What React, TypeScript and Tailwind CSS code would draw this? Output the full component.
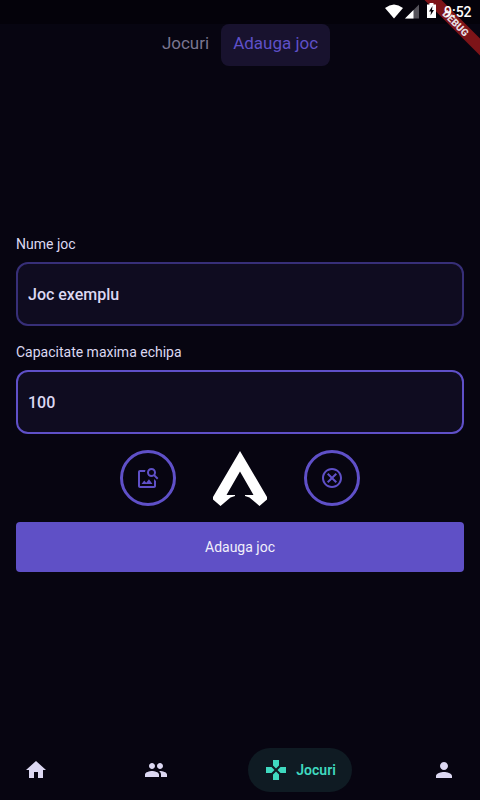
import { useState } from "react";
import {
  MdGames,
  MdHome,
  MdOutlineCancel,
  MdOutlineImageSearch,
  MdPerson,
} from "react-icons/md";

function StatusBar() {
  return (
    <header className="relative flex h-6 items-center justify-end bg-[#04020a] pr-2 text-white">
      <div className="absolute top-0 right-0 h-16 w-16 overflow-hidden">
        <div className="absolute top-[17px] -right-8 flex h-3 w-28 rotate-45 items-center justify-center bg-[#7d1418] text-[10px] font-black text-[#e6dfe4]">
          DEBUG
        </div>
      </div>
      <svg className="relative h-6 w-[52px]" viewBox="0 0 52 24" aria-hidden="true">
        <path d="M1 8Q10 1 19 8L10 18.500Z" fill="currentColor" />
        <path d="M35 4.500V18.500H21Z" fill="#55535a" />
        <path d="M29.500 10V18.500H21Z" fill="currentColor" />
        <path d="M43 4.500H45.500V3H49.500V4.500H52V18H43Z" fill="currentColor" />
        <path d="M48.500 6L45 11.500H47L46.500 15.500L50 10H48Z" fill="#04020a" />
      </svg>
      <time className="relative ml-2 w-7 text-sm leading-6 font-medium">9:52</time>
    </header>
  );
}

function PeopleIcon() {
  return (
    <svg className="size-6" viewBox="0 0 24 24" fill="currentColor" aria-hidden="true">
      <path d="M16 11c1.660 0 2.990-1.340 2.990-3S17.660 5 16 5s-3 1.340-3 3 1.340 3 3 3zm-8 0c1.660 0 2.990-1.340 2.990-3S9.660 5 8 5 5 6.340 5 8s1.340 3 3 3zm0 2c-2.330 0-7 1.170-7 3.500V19h14v-2.500c0-2.330-4.670-3.500-7-3.500zm8 0c-.290 0-.620.020-.970.050 1.160.840 1.970 1.970 1.970 3.450V19h6v-2.500c0-2.330-4.670-3.500-7-3.500z" />
    </svg>
  );
}

function Field({
  id,
  label,
  initial,
  className,
}: {
  id: string;
  label: string;
  initial: string;
  className: string;
}) {
  const [value, setValue] = useState(initial);
  return (
    <div className="flex flex-col gap-2">
      <label htmlFor={id} className="text-sm leading-5">
        {label}
      </label>
      <input
        id={id}
        value={value}
        onChange={(e) => setValue(e.target.value)}
        className={`h-16 w-full rounded-xl border-2 bg-[#0f0c20] px-[10px] text-base font-medium outline-none ${className}`}
      />
    </div>
  );
}

export default function App() {
  const circle =
    "flex size-14 items-center justify-center rounded-full border-3 border-[#5f50c8] text-[#5f50c8]";
  const navItem = "flex h-11 items-center gap-2 rounded-full px-4";
  return (
    <div className="flex min-h-screen flex-col bg-[#070511] font-[Roboto,sans-serif] text-[#dcd8f2]">
      <StatusBar />
      <div className="flex justify-center text-[17px]">
        <button className="h-[42px] rounded-lg px-3 pb-0.5 text-[#7a7690]">Jocuri</button>
        <button className="h-[42px] rounded-lg bg-[#18122e] px-3 pb-0.5 text-[#5f50c8]">
          Adauga joc
        </button>
      </div>

      <form
        className="flex flex-1 flex-col justify-center gap-4 px-4"
        onSubmit={(e) => e.preventDefault()}
      >
        <Field id="name" label="Nume joc" initial="Joc exemplu" className="border-[#372f78]" />
        <Field
          id="capacity"
          label="Capacitate maxima echipa"
          initial="100"
          className="border-[#5f50c8]"
        />
        <div className="flex justify-center gap-9">
          <button type="button" aria-label="Alege imagine" className={circle}>
            <MdOutlineImageSearch size={24} />
          </button>
          <svg className="size-14" viewBox="0 0 56 56" fill="#fff" aria-hidden="true">
            <path d="M28 1L55 47V49.500L47.500 56L37.500 47.500L33 46V45H41.500L28 21.500L14.500 45H23V46L18.500 47.500L8.500 56L1 49.500V47Z" />
          </svg>
          <button type="button" aria-label="Sterge imaginea" className={circle}>
            <MdOutlineCancel size={24} />
          </button>
        </div>
        <button type="submit" className="h-[50px] rounded bg-[#5f50c6] text-sm text-[#f1effb]">
          Adauga joc
        </button>
      </form>

      <nav className="flex justify-between px-2 pt-2 pb-2">
        <a href="#acasa" aria-label="Acasa" className={navItem}>
          <MdHome size={24} />
        </a>
        <a href="#echipe" aria-label="Echipe" className={navItem}>
          <PeopleIcon />
        </a>
        <a href="#jocuri" className={`${navItem} bg-[#0f1b23] text-[#3fd9bf]`}>
          <MdGames size={24} />
          <span className="text-sm font-semibold">Jocuri</span>
        </a>
        <a href="#profil" aria-label="Profil" className={navItem}>
          <MdPerson size={24} />
        </a>
      </nav>
    </div>
  );
}
